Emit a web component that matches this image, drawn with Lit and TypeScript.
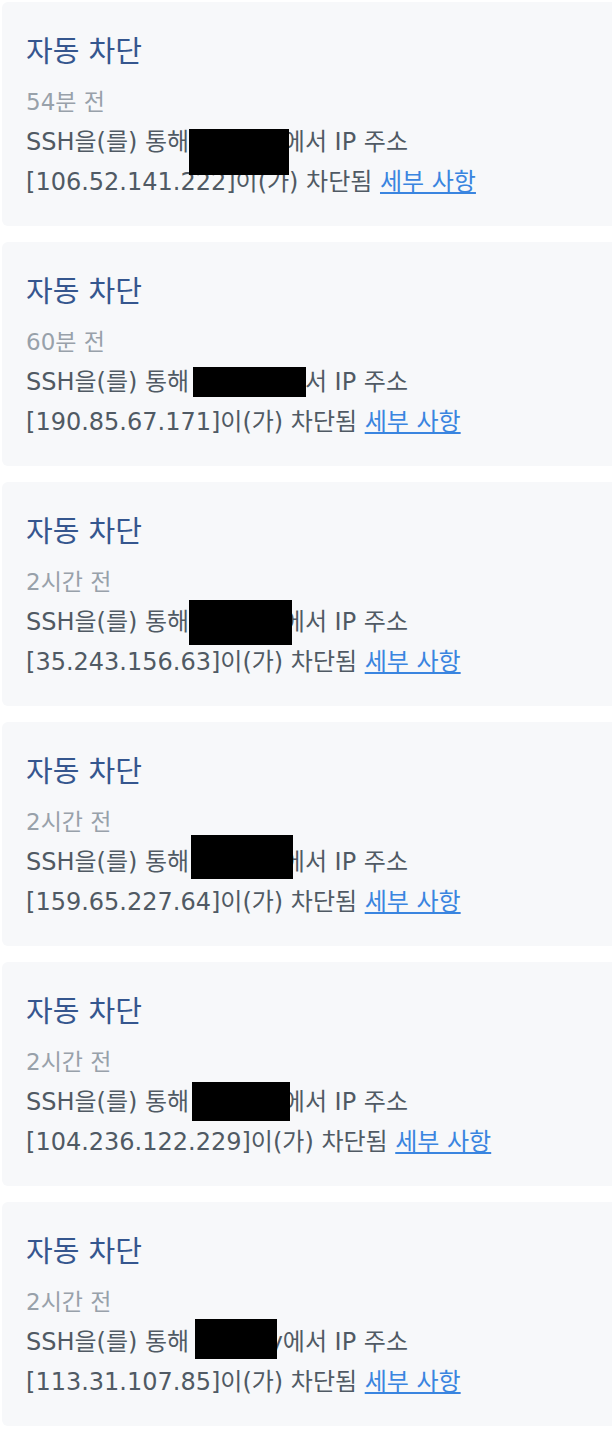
import { LitElement, html, css } from "lit";
import { customElement, property } from "lit/decorators.js";
import { styleMap } from "lit/directives/style-map.js";

interface Mask {
  x: number;
  y: number;
  w: number;
  h: number;
}

interface Entry {
  time: string;
  ip: string;
  tail: string;
  mask: Mask;
}

const ENTRIES: Entry[] = [
  { time: "54분 전", ip: "106.52.141.222", tail: "", mask: { x: 163, y: 7, w: 100, h: 46 } },
  { time: "60분 전", ip: "190.85.67.171", tail: "", mask: { x: 167, y: 5, w: 113, h: 30 } },
  { time: "2시간 전", ip: "35.243.156.63", tail: "", mask: { x: 163, y: -2, w: 103, h: 45 } },
  { time: "2시간 전", ip: "159.65.227.64", tail: "", mask: { x: 165, y: -7, w: 102, h: 44 } },
  { time: "2시간 전", ip: "104.236.122.229", tail: "", mask: { x: 166, y: 0, w: 98, h: 39 } },
  { time: "2시간 전", ip: "113.31.107.85", tail: "y", mask: { x: 169, y: -3, w: 82, h: 40 } },
];

@customElement("log-card")
export class LogCard extends LitElement {
  @property({ attribute: false }) entry!: Entry;

  static styles = css`
    :host {
      display: block;
      padding: 24px;
      border-radius: 6px 0 0 6px;
      background: #f7f8fa;
      color: #505a64;
      font: 24px/40px "DejaVu Sans", "Noto Sans CJK KR", sans-serif;
      word-break: keep-all;
    }
    .title {
      margin: 0 0 4px;
      color: #35568e;
      font-size: 29px;
      font-weight: 400;
      line-height: 52px;
    }
    .time,
    .message {
      margin: 0;
    }
    .time {
      color: #98a1aa;
      font-size: 23px;
    }
    .message {
      position: relative;
    }
    .name {
      display: inline-block;
      width: 86px;
      text-align: right;
    }
    .mask {
      position: absolute;
      background: #000;
    }
    .link {
      color: #3a85e0;
      text-decoration: underline;
      text-decoration-thickness: 2px;
      text-underline-offset: 2px;
    }
  `;

  render() {
    const { time, ip, tail, mask } = this.entry;
    const box = {
      left: `${mask.x}px`,
      top: `${mask.y}px`,
      width: `${mask.w}px`,
      height: `${mask.h}px`,
    };
    return html`
      <h2 class="title">자동 차단</h2>
      <p class="time">${time}</p>
      <p class="message">
        SSH을(를) 통해 <span class="name">${tail}</span>에서 IP 주소
        [${ip}]이(가) 차단됨 <a class="link" href="#">세부 사항</a>
        <span class="mask" style=${styleMap(box)}></span>
      </p>
    `;
  }
}

@customElement("app-root")
export class AppRoot extends LitElement {
  static styles = css`
    :host {
      display: block;
      background: #fff;
    }
    .list {
      display: flex;
      flex-direction: column;
      gap: 16px;
      padding: 2px 0 10px 2px;
    }
  `;

  render() {
    return html`<main class="list">
      ${ENTRIES.map((entry) => html`<log-card .entry=${entry}></log-card>`)}
    </main>`;
  }
}
